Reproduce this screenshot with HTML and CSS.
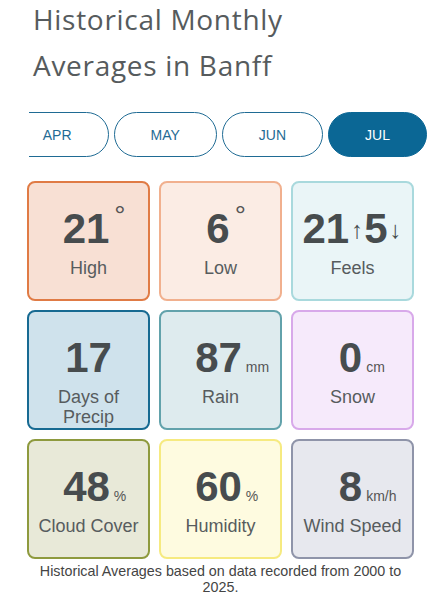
FILE: index.html
```html
<!DOCTYPE html>
<html lang="en">
<head>
  <meta charset="UTF-8" />
  <meta name="viewport" content="width=device-width, initial-scale=1.0" />
  <title>Historical Monthly Averages in Banff</title>
  <link rel="stylesheet" href="styles.css">
</head>
<body>
  <main class="averages">
    <h1 class="averages-title">Historical Monthly Averages in Banff</h1>

    <nav class="months">
      <button class="month">APR</button>
      <button class="month">MAY</button>
      <button class="month">JUN</button>
      <button class="month month-active">JUL</button>
    </nav>

    <section class="stats">
      <div class="stat stat-high">
        <div class="stat-value">21<span class="stat-unit stat-deg">°</span></div>
        <div class="stat-label">High</div>
      </div>
      <div class="stat stat-low">
        <div class="stat-value">6<span class="stat-unit stat-deg">°</span></div>
        <div class="stat-label">Low</div>
      </div>
      <div class="stat stat-feels">
        <div class="stat-value">21<span class="stat-arrow">↑</span>5<span class="stat-arrow">↓</span></div>
        <div class="stat-label">Feels</div>
      </div>

      <div class="stat stat-precip">
        <div class="stat-value">17</div>
        <div class="stat-label">Days of Precip</div>
      </div>
      <div class="stat stat-rain">
        <div class="stat-value">87<span class="stat-unit">mm</span></div>
        <div class="stat-label">Rain</div>
      </div>
      <div class="stat stat-snow">
        <div class="stat-value">0<span class="stat-unit">cm</span></div>
        <div class="stat-label">Snow</div>
      </div>

      <div class="stat stat-cloud">
        <div class="stat-value">48<span class="stat-unit">%</span></div>
        <div class="stat-label">Cloud Cover</div>
      </div>
      <div class="stat stat-humidity">
        <div class="stat-value">60<span class="stat-unit">%</span></div>
        <div class="stat-label">Humidity</div>
      </div>
      <div class="stat stat-wind">
        <div class="stat-value">8<span class="stat-unit">km/h</span></div>
        <div class="stat-label">Wind Speed</div>
      </div>
    </section>

    <p class="averages-note">Historical Averages based on data recorded from 2000 to 2025.</p>
  </main>
</body>
</html>
```

FILE: styles.css
```css
body {
  margin: 0;
  font-family: 'Liberation Sans', Arial, sans-serif;
  background-color: #ffffff;
  color: #474c4e;
}

.averages {
  width: 387px;
  padding-left: 27px;
}

.averages-title {
  margin: -4px 0 0 0;
  padding-left: 6px;
  font-family: 'Open Sans', sans-serif;
  font-size: 28px;
  font-weight: 400;
  letter-spacing: 0.7px;
  line-height: 46px;
  color: #565b5d;
  max-width: 300px;
}

.months {
  display: flex;
  justify-content: flex-end;
  gap: 5px;
  margin: 24px 0 0 2px;
  width: 398px;
  overflow: hidden;
}

.month {
  flex-shrink: 0;
  height: 45px;
  padding: 0 36px;
  font-family: 'Liberation Sans', Arial, sans-serif;
  font-size: 14px;
  color: #1f6b94;
  background-color: #ffffff;
  border: 1.5px solid #1f6b94;
  border-radius: 23px;
  cursor: pointer;
}

.month-active {
  background-color: #0b6795;
  border-color: #0b6795;
  color: #ffffff;
}

.stats {
  display: grid;
  grid-template-columns: 123px 123px 123px;
  grid-auto-rows: 120px;
  column-gap: 9px;
  row-gap: 9px;
  margin-top: 24px;
}

.stat {
  box-sizing: border-box;
  border: 2px solid #ccc;
  border-radius: 8px;
  padding-top: 24px;
  text-align: center;
}

.stat-value {
  font-size: 42px;
  font-weight: 700;
  line-height: 44px;
  height: 44px;
  color: #474c4e;
  white-space: nowrap;
}

.stat-unit {
  display: inline-block;
  width: 0;
  padding-left: 4px;
  font-size: 14px;
  font-weight: 400;
  line-height: 1;
  color: #555;
  text-align: left;
  white-space: nowrap;
}

.stat-deg {
  font-size: 28px;
  font-weight: 300;
  vertical-align: 18px;
  line-height: 0;
  padding-left: 5px;
}

.stat-arrow {
  font-size: 24px;
  font-weight: 400;
  line-height: 1;
  margin: 0 1px 0 2px;
  vertical-align: 5px;
}

.stat-label {
  margin-top: 7px;
  font-size: 18px;
  line-height: 20px;
  color: #575c5e;
  padding: 0 8px;
}

.stat-precip .stat-label {
  padding: 0 22px;
}

.stat-high { background-color: #f8e0d4; border-color: #e07b45; }
.stat-low { background-color: #fbece4; border-color: #f1b08e; }
.stat-feels { background-color: #eaf5f7; border-color: #a9d9dd; }
.stat-precip { background-color: #cfe2ec; border-color: #176a92; }
.stat-rain { background-color: #deebee; border-color: #62a2ab; }
.stat-snow { background-color: #f6eafb; border-color: #d8a9ea; }
.stat-cloud { background-color: #e8e9d8; border-color: #8e9a3e; }
.stat-humidity { background-color: #fefbe0; border-color: #f6ea80; }
.stat-wind { background-color: #e7e8ee; border-color: #8f94a9; }

.averages-note {
  margin: 4px 0 0 0;
  font-size: 14.3px;
  line-height: 16px;
  text-align: center;
  color: #444;
}
```
